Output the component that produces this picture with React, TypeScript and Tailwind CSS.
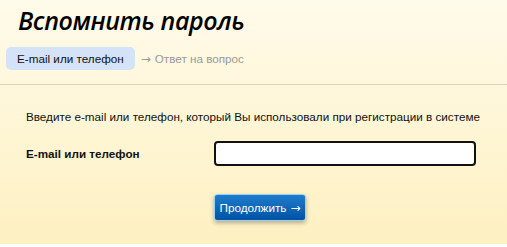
import React, { useState } from 'react';

const STEPS = ['E-mail или телефон', 'Ответ на вопрос'];

export default function App() {
  const [login, setLogin] = useState('');

  return (
    <div className="w-[507px] h-[247px] bg-white font-['Liberation_Sans',Arial,sans-serif]">
      <div className="h-[244px] bg-gradient-to-b from-[#fffbea] to-[#fdf0c1]">
        <h1 className="pl-[18px] pt-[4px] h-[42px] text-[25px] leading-[32px] italic font-semibold text-black font-['Open_Sans',sans-serif] tracking-[-0.4px]">
          Вспомнить пароль
        </h1>

        <div className="flex items-start pl-[6px] pt-[5px] h-[42px] text-[11.7px]">
          <span className="h-[23px] px-[11px] flex items-center rounded-[5px] bg-[#d5e3f9] text-[#111]">
            {STEPS[0]}
          </span>
          <span className="ml-[6px] h-[23px] flex items-center text-[#999]">
            <span className="font-['DejaVu_Sans',sans-serif] text-[12px] mr-[4px]">→</span>
            {STEPS[1]}
          </span>
        </div>

        <div className="border-t border-[#d8d3bd]" />

        <p className="pl-[26px] pt-[25px] text-[11.7px] leading-[14px] text-[#111]">
          Введите e-mail или телефон, который Вы использовали при регистрации в системе
        </p>

        <div className="flex items-center pt-[17px]">
          <label className="w-[214px] pl-[26px] text-[11.7px] font-bold text-[#111]">E-mail или телефон</label>
          <input
            value={login}
            onChange={e => setLogin(e.target.value)}
            className="w-[262px] h-[25px] bg-white border-2 border-[#111] rounded-[4px] px-1 text-[12px] outline-none"
          />
        </div>

        <div className="pl-[214px] pt-[28px]">
          <button className="h-[27px] w-[92px] flex items-center justify-center rounded-[3px] border border-[#9fd0ee] bg-gradient-to-b from-[#1f7ccc] to-[#0052a3] text-white text-[11.7px] shadow-[0_2px_4px_rgba(0,0,0,0.3)]">
            Продолжить
            <span className="font-['DejaVu_Sans',sans-serif] text-[12px] ml-[4px]">→</span>
          </button>
        </div>
      </div>
    </div>
  );
}
